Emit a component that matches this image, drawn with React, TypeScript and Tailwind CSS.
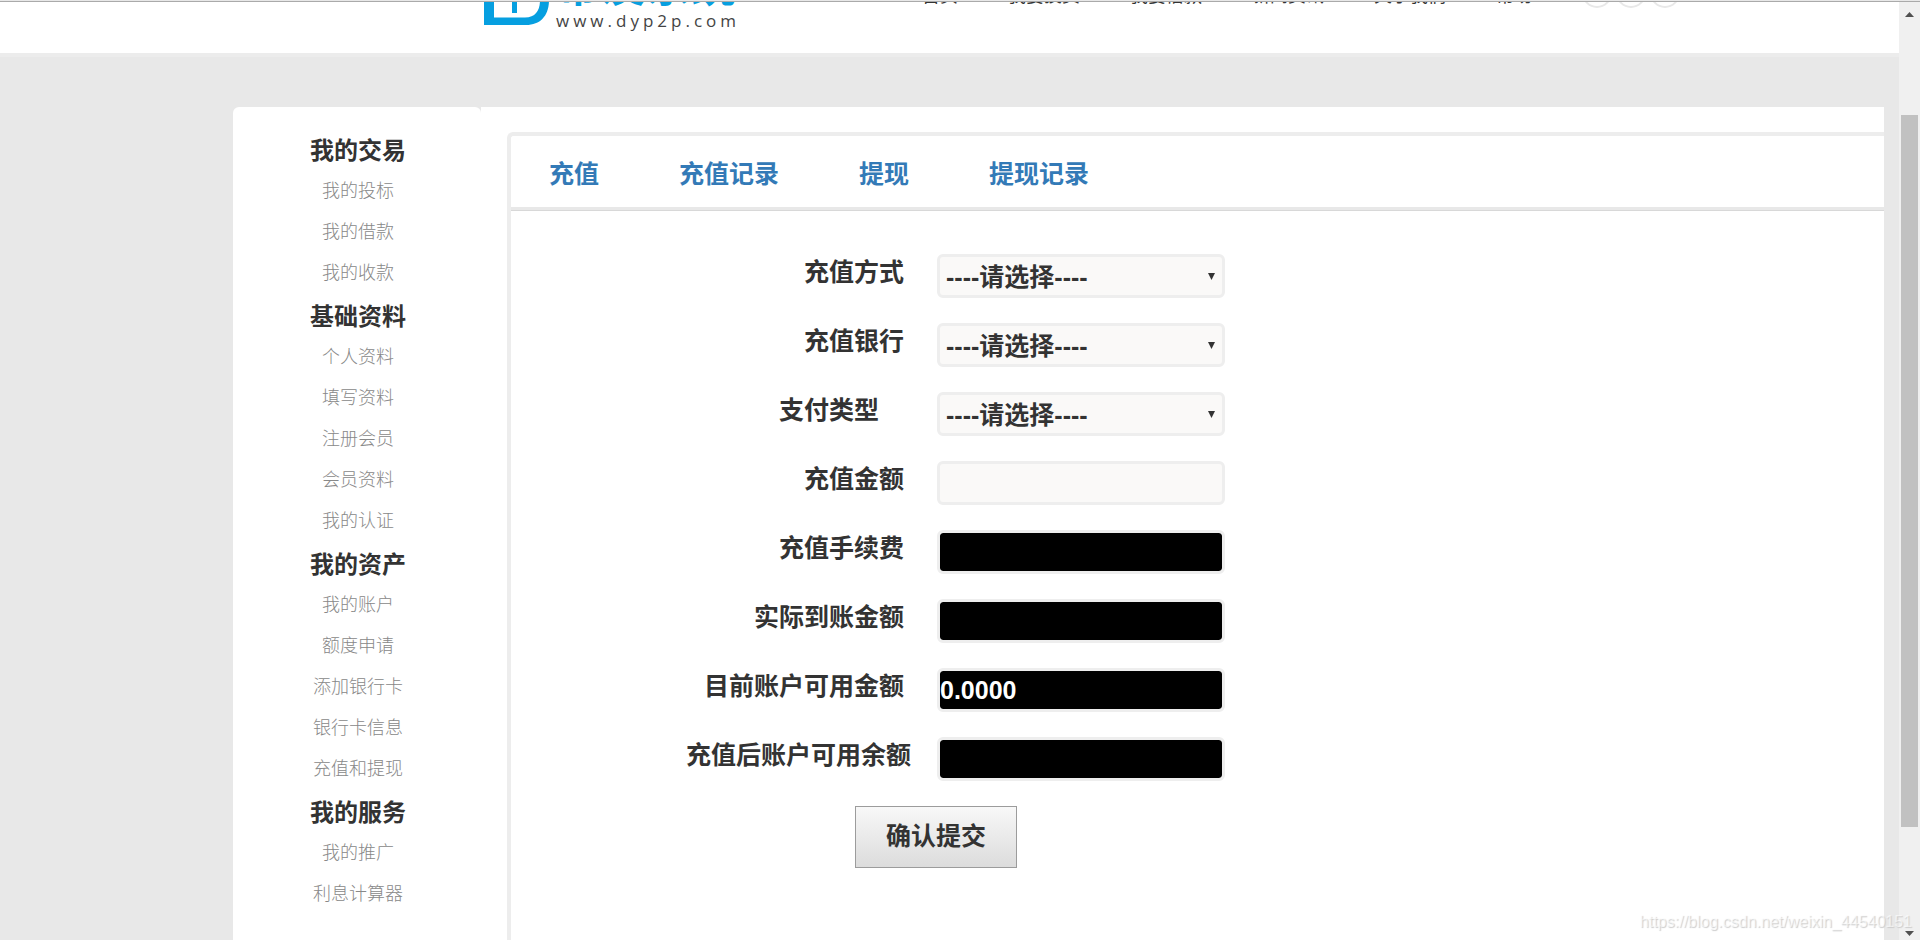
import { useState } from "react";

interface MenuGroup {
  title: string;
  links: string[];
}

interface Field {
  id: string;
  label: string;
  type: "select" | "text" | "readonly";
  value?: string;
}

const navItems = ["首页", "我要投资", "我要借款", "新闻资讯", "关于我们", "帮助"];

const menuGroups: MenuGroup[] = [
  { title: "我的交易", links: ["我的投标", "我的借款", "我的收款"] },
  { title: "基础资料", links: ["个人资料", "填写资料", "注册会员", "会员资料", "我的认证"] },
  { title: "我的资产", links: ["我的账户", "额度申请", "添加银行卡", "银行卡信息", "充值和提现"] },
  { title: "我的服务", links: ["我的推广", "利息计算器"] }
];

const tabs = ["充值", "充值记录", "提现", "提现记录"];

const fields: Field[] = [
  { id: "payWay", label: "充值方式\u00a0", type: "select" },
  { id: "payBank", label: "充值银行\u00a0", type: "select" },
  { id: "payType", label: "支付类型\u3000\u00a0", type: "select" },
  { id: "amount", label: "充值金额\u00a0", type: "text" },
  { id: "fee", label: "充值手续费\u00a0", type: "readonly" },
  { id: "realAmount", label: "实际到账金额\u00a0", type: "readonly" },
  { id: "balance", label: "目前账户可用金额\u00a0", type: "readonly", value: "0.0000" },
  { id: "newBalance", label: "充值后账户可用余额", type: "readonly" }
];

function Header() {
  return (
    <header className="flex h-[56px] items-end overflow-hidden border-t border-b-4 border-t-[#aaaaaa] border-b-[#ececec] bg-white pl-[484px]">
      <a href="#" className="flex items-end pb-[20px]" aria-label="帝友系统">
        <svg width="68" height="48" viewBox="0 0 68 48" className="mb-[8px] shrink-0">
          <path
            d="M0 0H36C54 0 65 10 65 23C65 38 57 48 42 48H0ZM10 8V40.500H41C52 40.500 56 33 56 23C56 14 49 8 36 8Z"
            fill="#069fe0"
            fillRule="evenodd"
          />
          <path d="M28 8H33V36H28Z" fill="#069fe0" />
        </svg>
        <span className="flex flex-col pl-1">
          <span className="text-[45px] leading-[45px] font-bold text-[#069fe0]">帝友系统</span>
          <span className="font-['Open_Sans',sans-serif] text-[17px] leading-6 tracking-[4px] text-[#444]">
            www.dyp2p.com
          </span>
        </span>
      </a>
      <nav className="ml-[182px] flex shrink-0 gap-[50px] pb-[45px]">
        {navItems.map((item) => (
          <a key={item} href="#" className="text-[18px] leading-6 text-[#333]">
            {item}
          </a>
        ))}
      </nav>
      <div className="ml-[50px] flex shrink-0 gap-1 pb-[45px]">
        <span className="size-[30px] rounded-full border-2 border-[#e8e8e8]" />
        <span className="size-[30px] rounded-full border-2 border-[#e8e8e8]" />
        <span className="size-[30px] rounded-full border-2 border-[#e8e8e8]" />
      </div>
    </header>
  );
}

function SideMenu() {
  return (
    <aside className="w-[248px] shrink-0 rounded-t-md bg-white pt-[21px] pl-[2px] text-center">
      {menuGroups.map((group) => (
        <section key={group.title}>
          <h2 className="h-[43px] pt-[2px] text-[24px] leading-[41px] font-bold">{group.title}</h2>
          <ul>
            {group.links.map((link) => (
              <li key={link} className="h-[41px] leading-[41px]">
                <a href="#" className="text-[18px] font-light text-[#888]">
                  {link}
                </a>
              </li>
            ))}
          </ul>
        </section>
      ))}
    </aside>
  );
}

function FieldControl({ field }: { field: Field }) {
  const [value, setValue] = useState<string>(field.value ?? "");

  if (field.type === "select") {
    return (
      <div className="relative">
        <select
          id={field.id}
          value={value}
          onChange={(e) => setValue(e.target.value)}
          className="block h-[44px] w-[288px] appearance-none rounded-md border-3 border-[#eeeeee] bg-[#faf9f8] px-[6px] pt-[2px] font-bold"
        >
          <option value="">----请选择----</option>
        </select>
        <svg width="7" height="7" viewBox="0 0 7 7" className="pointer-events-none absolute top-[19px] right-[10px]">
          <path d="M0 0H7L3.500 7Z" fill="#333" />
        </svg>
      </div>
    );
  }

  if (field.type === "readonly") {
    return (
      <input
        id={field.id}
        type="text"
        value={value}
        readOnly
        className="h-[44px] w-[288px] rounded-md border-3 border-[#eeeeee] bg-black bg-clip-padding font-bold text-white"
      />
    );
  }

  return (
    <input
      id={field.id}
      type="text"
      value={value}
      onChange={(e) => setValue(e.target.value)}
      className="h-[44px] w-[288px] rounded-md border-3 border-[#eeeeee] bg-[#faf9f8] font-bold"
    />
  );
}

function RechargeForm() {
  return (
    <form
      onSubmit={(e) => e.preventDefault()}
      className="flex flex-col gap-[25px] pt-[44px] pl-[160px] text-[25px] font-bold"
    >
      {fields.map((field) => (
        <div key={field.id} className="flex items-start gap-[26px]">
          <label htmlFor={field.id} className="w-[240px] text-right leading-9 whitespace-nowrap">
            {field.label}
          </label>
          <FieldControl field={field} />
        </div>
      ))}
      <button
        type="submit"
        className="ml-[184px] h-[62px] w-[162px] border border-[#9c9c9c] bg-linear-to-b from-[#f8f8f8] to-[#dcdcdc]"
      >
        确认提交
      </button>
    </form>
  );
}

function ScrollBar() {
  return (
    <div className="flex w-[21px] shrink-0 flex-col items-center border-t border-[#aaaaaa] bg-[#f0f0f0]">
      <div className="h-[12%] pt-[10px]">
        <svg width="9" height="5" viewBox="0 0 9 5">
          <path d="M0 5L4.500 0L9 5Z" fill="#505050" />
        </svg>
      </div>
      <div className="h-[76%] w-[17px] bg-[#c1c1c1]" />
      <div className="flex flex-1 items-end pb-[4px]">
        <svg width="9" height="5" viewBox="0 0 9 5">
          <path d="M0 0H9L4.500 5Z" fill="#505050" />
        </svg>
      </div>
    </div>
  );
}

export default function App() {
  return (
    <div className="relative flex min-h-screen flex-col bg-[#e8e8e8] pt-px font-['Liberation_Sans','Noto_Sans_CJK_SC',sans-serif] text-[#333]">
      <div className="flex flex-1">
        <div className="flex min-w-0 flex-1 flex-col">
          <Header />
          <div className="flex flex-1 pt-[50px] pr-[15px] pl-[233px]">
            <SideMenu />
            <main className="flex min-w-0 flex-1 bg-white pt-[25px] pl-[26px]">
              <div className="flex-1 rounded-tl-md border-t-4 border-l-4 border-[#ededed]">
                <nav className="flex h-[74px] items-center gap-[80px] border-b-3 border-[#e8e8e8] pt-[6px] pl-[38px] shadow-[0_1px_0_#d8d8d8]">
                  {tabs.map((tab) => (
                    <a key={tab} href="#" className="text-[25px] font-bold text-[#337ab7]">
                      {tab}
                    </a>
                  ))}
                </nav>
                <RechargeForm />
              </div>
            </main>
          </div>
        </div>
        <ScrollBar />
      </div>
      <p className="pointer-events-none absolute right-[8px] bottom-[6px] text-[16px] leading-6 text-white/60 [text-shadow:1px_1px_1px_#cccccc]">
        https://blog.csdn.net/weixin_44540151
      </p>
    </div>
  );
}
